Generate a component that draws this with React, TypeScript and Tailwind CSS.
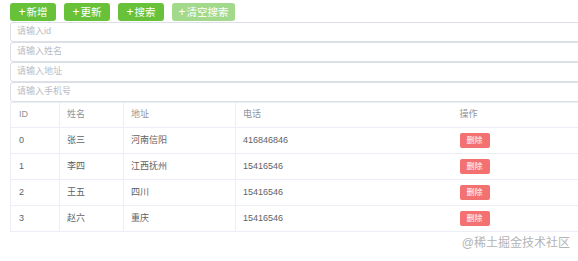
const rows = [
  { id: 0, name: "张三", addr: "河南信阳", phone: "416846846" },
  { id: 1, name: "李四", addr: "江西抚州", phone: "15416546" },
  { id: 2, name: "王五", addr: "四川", phone: "15416546" },
  { id: 3, name: "赵六", addr: "重庆", phone: "15416546" },
];

const placeholders = ["请输入id", "请输入姓名", "请输入地址", "请输入手机号"];

const font = "font-['Liberation_Sans','Noto_Sans_CJK_SC',sans-serif]";

function GreenButton({ label, faded }: { label: string; faded?: boolean }) {
  return (
    <button
      type="button"
      className={`flex h-[18px] w-full items-center justify-center rounded-[3px] text-[10.5px] leading-none text-white ${
        faded ? "bg-[#a3d98a]" : "bg-[#67c23a]"
      }`}
    >
      <span className="mr-[1px] text-[12px] font-light">+</span>
      {label}
    </button>
  );
}

export default function App() {
  return (
    <div className={`relative h-[261px] w-[578px] overflow-hidden bg-white ${font}`}>
      <div className="pl-[10px] pt-[3px]">
        <div className="flex gap-[8px]">
          <div className="w-[46px]">
            <GreenButton label="新增" />
          </div>
          <div className="w-[46px]">
            <GreenButton label="更新" />
          </div>
          <div className="w-[46px]">
            <GreenButton label="搜索" />
          </div>
          <div className="w-[63px]">
            <GreenButton label="清空搜索" faded />
          </div>
        </div>

        <div className="mt-[1px] flex flex-col">
          {placeholders.map((p) => (
            <div
              key={p}
              className="flex h-[20px] w-[580px] items-center rounded-[3px] border border-[#dcdfe6] pl-[6px] text-[9px] text-[#b8bcc4]"
            >
              {p}
            </div>
          ))}
        </div>

        <table className="w-[580px] border-collapse text-left text-[9px] text-[#606266]">
          <colgroup>
            <col className="w-[49px]" />
            <col className="w-[64px]" />
            <col className="w-[112px]" />
            <col className="w-[216px]" />
            <col />
          </colgroup>
          <thead>
            <tr className="h-[25px] border-y border-[#ebeef5] text-[#909399]">
              <th className="border-l border-[#ebeef5] pl-[8px] font-normal">ID</th>
              <th className="border-l border-[#ebeef5] pl-[7px] font-normal">姓名</th>
              <th className="border-l border-[#ebeef5] pl-[7px] font-normal">地址</th>
              <th className="border-l border-[#ebeef5] pl-[7px] font-normal">电话</th>
              <th className="pl-[8px] font-normal">操作</th>
            </tr>
          </thead>
          <tbody>
            {rows.map((r) => (
              <tr key={r.id} className="h-[26px] border-b border-[#ebeef5]">
                <td className="border-l border-[#ebeef5] pl-[8px]">{r.id}</td>
                <td className="border-l border-[#ebeef5] pl-[7px]">{r.name}</td>
                <td className="border-l border-[#ebeef5] pl-[7px]">{r.addr}</td>
                <td className="border-l border-[#ebeef5] pl-[7px]">{r.phone}</td>
                <td className="pl-[8px]">
                  <button
                    type="button"
                    className="flex h-[15px] w-[30px] items-center justify-center rounded-[2px] bg-[#f37171] text-[8px] text-white"
                  >
                    删除
                  </button>
                </td>
              </tr>
            ))}
          </tbody>
        </table>
      </div>

      <div className="absolute right-[8px] bottom-[9px] text-[12px] text-[#b4b4b4]">@稀土掘金技术社区</div>
    </div>
  );
}
